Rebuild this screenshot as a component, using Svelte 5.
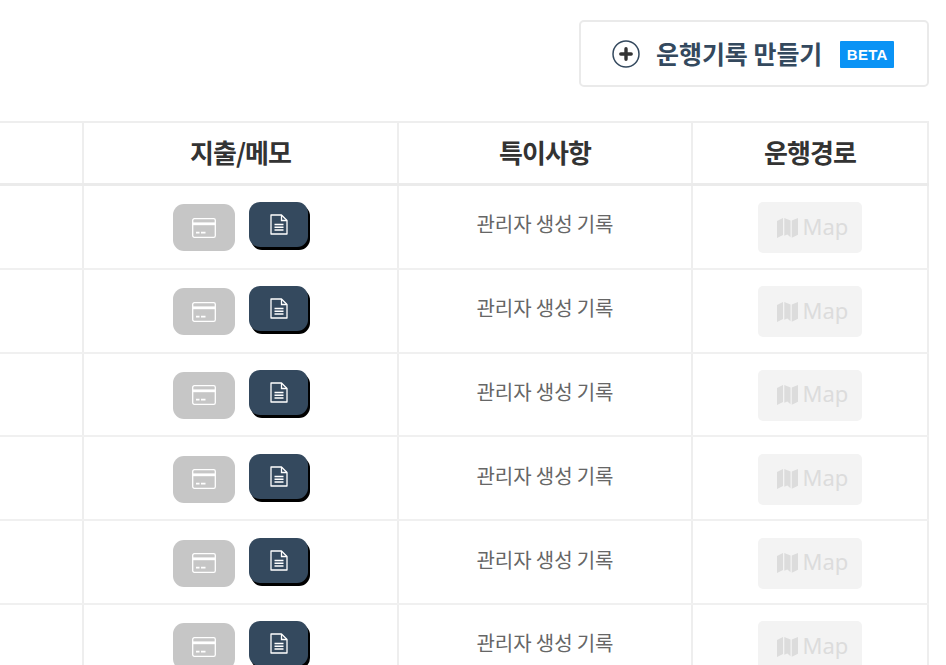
<script lang="ts">
	const rows = [0, 1, 2, 3, 4, 5];
</script>

<div class="page">
	<div class="toolbar">
		<button class="create">
			<svg class="plus" width="28" height="28" viewBox="0 0 28 28">
				<circle cx="14" cy="14" r="13" fill="none" stroke="#34495e" stroke-width="1.5" />
				<path d="M14 8.800v10.400M8.800 14h10.400" stroke="#333" stroke-width="3.400" stroke-linecap="round" />
			</svg>
			<span class="create-label">운행기록 만들기</span>
			<span class="beta">BETA</span>
		</button>
	</div>

	<div class="table">
		<div class="row head">
			<div class="cell"></div>
			<div class="cell"><span>지출/메모</span></div>
			<div class="cell"><span>특이사항</span></div>
			<div class="cell"><span>운행경로</span></div>
		</div>
		{#each rows as r (r)}
			<div class="row">
				<div class="cell"></div>
				<div class="cell actions">
					<button class="icon-btn card" aria-label="지출">
						<svg width="24" height="20" viewBox="0 0 24 20" fill="none" stroke="#fff" stroke-width="1.3">
							<rect x="0.7" y="0.7" width="22.6" height="18.6" rx="1.6" />
							<path d="M0.7 5.800h22.600" stroke-width="2.800" />
							<path d="M4 14.600h3.500M9 14.600h4.500" stroke-width="1.600" />
						</svg>
					</button>
					<button class="icon-btn memo" aria-label="메모">
						<svg width="18" height="21" viewBox="0 0 18 21" fill="none" stroke="#fff" stroke-width="1.3">
							<path d="M1 1h10.500L17 6.500V20H1z" stroke-linejoin="round" />
							<path d="M11.500 1v5.500H17" />
							<path d="M4.500 10.500h9M4.500 13.200h9M4.500 15.900h9" stroke-width="1.500" />
						</svg>
					</button>
				</div>
				<div class="cell note"><span>관리자 생성 기록</span></div>
				<div class="cell">
					<div class="map">
						<svg width="21" height="22" viewBox="0 0 21 22" fill="#dcdcdc">
							<path d="M0 4l6-3v17l-6 3zM7.300 1l6.200 2.600v16.600l-3.100-2.600-3.100 1.200zM14.800 3.600L21 1v16.800l-6.200 3z" />
						</svg>
						<span>Map</span>
					</div>
				</div>
			</div>
		{/each}
	</div>
</div>

<style>
	:global(body) {
		margin: 0;
		background: #fff;
		overflow: hidden;
	}

	.page {
		width: 946px;
		height: 665px;
		overflow: hidden;
		box-sizing: border-box;
		padding: 20px 17px 0 0;
		font-family: "Noto Sans CJK KR", "Noto Sans", sans-serif;
	}

	.toolbar {
		display: flex;
		justify-content: flex-end;
		margin-bottom: 34px;
	}

	button {
		font-family: inherit;
		cursor: pointer;
	}

	.create {
		width: 350px;
		height: 67px;
		box-sizing: border-box;
		display: flex;
		align-items: center;
		padding: 0 0 0 31px;
		background: #fff;
		border: 2px solid #eaeaea;
		border-radius: 5px;
	}

	.create-label {
		margin-left: 16px;
		padding-bottom: 2px;
		font-size: 25px;
		font-weight: 700;
		letter-spacing: -0.05px;
		color: #34495e;
	}

	.beta {
		margin: 2px 0 0 18px;
		width: 54px;
		height: 27px;
		display: flex;
		align-items: center;
		justify-content: center;
		background: #0a93f5;
		border-radius: 1px;
		color: #fff;
		font-family: "Liberation Sans", sans-serif;
		font-size: 15px;
		font-weight: 700;
		letter-spacing: 0.3px;
	}

	.table {
		border-top: 2px solid #eee;
	}

	.row {
		display: grid;
		grid-template-columns: 84px 315px 294px 236px;
		height: 83.8px;
		box-sizing: border-box;
		border-bottom: 2px solid #f0f0f0;
	}

	.row.head {
		height: 63px;
		border-bottom: 3px solid #ebebeb;
		font-size: 26px;
		font-weight: 700;
		letter-spacing: -0.9px;
		color: #333;
	}

	.head span {
		padding-bottom: 3px;
	}

	.cell {
		display: flex;
		align-items: center;
		justify-content: center;
		border-right: 2px solid #eee;
	}

	.actions {
		gap: 14px;
	}

	.note {
		font-size: 20px;
		letter-spacing: -0.1px;
		color: #666;
	}

	.note span {
		padding-bottom: 6px;
	}

	.icon-btn {
		display: flex;
		align-items: center;
		justify-content: center;
		padding: 0;
		border: none;
		border-radius: 11px;
	}

	.card {
		width: 62px;
		height: 47px;
		margin-top: 2px;
		background: #c6c6c6;
	}

	.memo {
		width: 59px;
		height: 45px;
		margin-top: -4px;
		background: #34495e;
		box-shadow: 2px 3px 0 #000;
	}

	.map {
		width: 104px;
		height: 51px;
		display: flex;
		align-items: center;
		justify-content: center;
		gap: 5px;
		margin-top: 2px;
		padding-left: 5px;
		box-sizing: border-box;
		background: #f3f3f3;
		border-radius: 5px;
		font-family: "Noto Sans", sans-serif;
		font-size: 22px;
		color: #dcdcdc;
	}

	.map span {
		padding-bottom: 4px;
	}
</style>
